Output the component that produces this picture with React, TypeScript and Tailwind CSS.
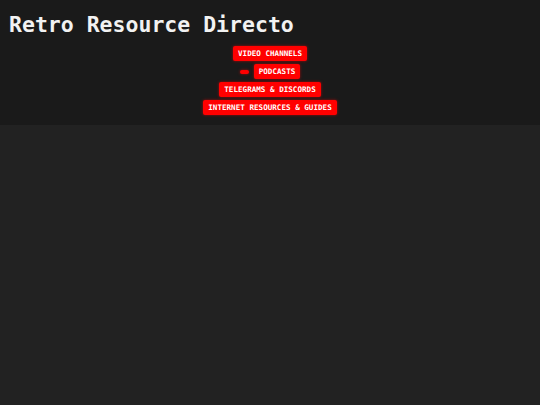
export default function App() {
  const mono = { fontFamily: '"DejaVu Sans Mono", "Liberation Mono", monospace' };
  return (
    <div className="min-h-[405px] w-full bg-[#222222]" style={mono}>
      <header className="bg-[#1a1a1a] pt-[11px] pb-[12px] h-[125px]">
        <h1 className="pl-[9px] text-[21.5px] leading-[28px] font-bold text-[#f2f2f2] whitespace-nowrap">
          Retro Resource Directo
        </h1>
        <nav className="mt-[7px] flex flex-col items-center gap-[3px]">
          <NavButton label="VIDEO CHANNELS" />
          <div className="flex items-center gap-[5px]">
            <span className="block h-[4px] w-[9px] rounded-full bg-[#ff0000] shadow-[0_0_3px_rgba(255,0,0,0.6)]" />
            <NavButton label="PODCASTS" />
          </div>
          <NavButton label="TELEGRAMS & DISCORDS" />
          <NavButton label="INTERNET RESOURCES & GUIDES" />
        </nav>
      </header>
    </div>
  );
}

function NavButton({ label }: { label: string }) {
  return (
    <a className="block h-[15px] rounded-[2px] bg-[#ff0000] px-[5px] text-[7.6px] leading-[15px] font-bold text-white shadow-[0_0_3px_rgba(255,0,0,0.6)] whitespace-nowrap">
      {label}
    </a>
  );
}
